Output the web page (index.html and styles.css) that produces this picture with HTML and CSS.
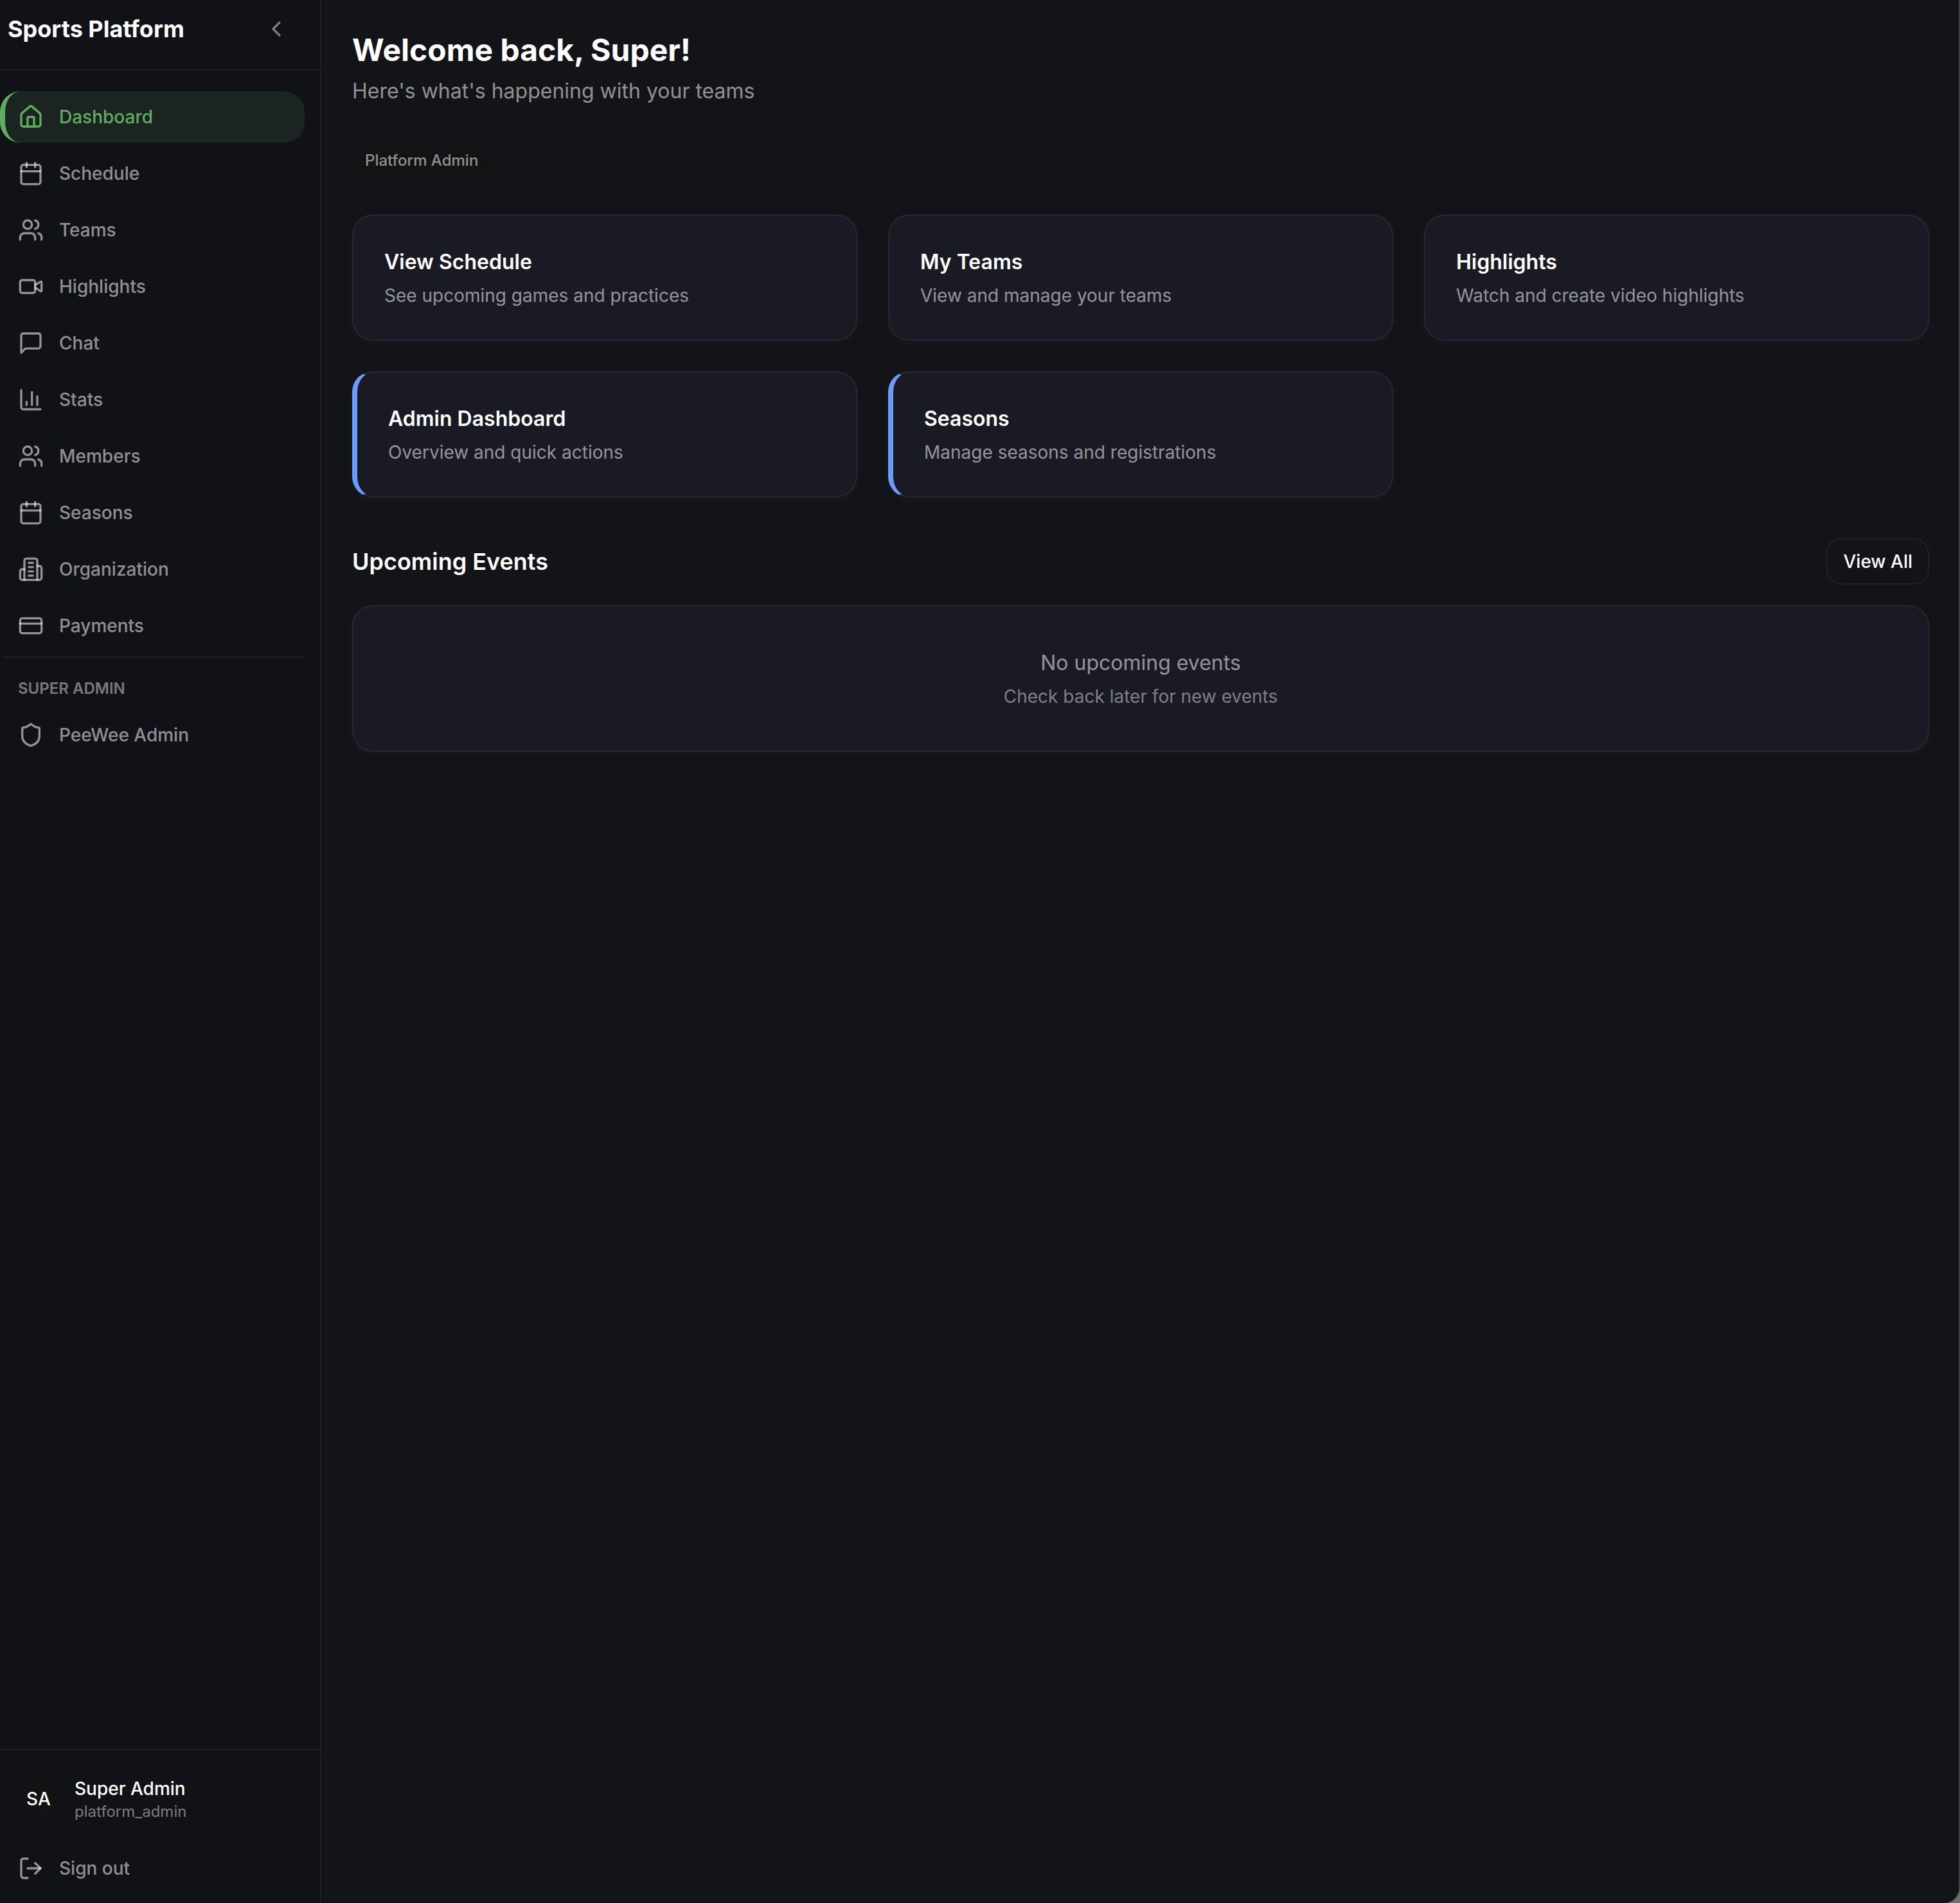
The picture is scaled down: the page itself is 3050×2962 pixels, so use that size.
FILE: index.html
```html
<!DOCTYPE html>
<html lang="en">
<head>
    <meta charset="UTF-8">
    <meta name="viewport" content="width=device-width, initial-scale=1.0">
    <title>Sports Platform</title>
    <link rel="stylesheet" href="styles.css">
</head>
<body>
    <div class="app">
        <aside class="sidebar">
            <div class="sidebar-header">
                <span class="brand">Sports Platform</span>
                <button type="button" class="collapse-btn" aria-label="Collapse sidebar">
                    <svg class="icon" viewBox="0 0 24 24"><path d="m15 18-6-6 6-6"/></svg>
                </button>
            </div>

            <nav class="nav">
                <a href="#" class="nav-item active">
                    <svg class="icon" viewBox="0 0 24 24"><path d="M15 21v-8a1 1 0 0 0-1-1h-4a1 1 0 0 0-1 1v8"/><path d="M3 10a2 2 0 0 1 .709-1.528l7-5.999a2 2 0 0 1 2.582 0l7 5.999A2 2 0 0 1 21 10v9a2 2 0 0 1-2 2H5a2 2 0 0 1-2-2z"/></svg>
                    Dashboard
                </a>
                <a href="#" class="nav-item">
                    <svg class="icon" viewBox="0 0 24 24"><path d="M8 2v4"/><path d="M16 2v4"/><rect width="18" height="18" x="3" y="4" rx="2"/><path d="M3 10h18"/></svg>
                    Schedule
                </a>
                <a href="#" class="nav-item">
                    <svg class="icon" viewBox="0 0 24 24"><path d="M16 21v-2a4 4 0 0 0-4-4H6a4 4 0 0 0-4 4v2"/><circle cx="9" cy="7" r="4"/><path d="M22 21v-2a4 4 0 0 0-3-3.87"/><path d="M16 3.13a4 4 0 0 1 0 7.75"/></svg>
                    Teams
                </a>
                <a href="#" class="nav-item">
                    <svg class="icon" viewBox="0 0 24 24"><path d="m16 13 5.223 3.482a.5.5 0 0 0 .777-.416V7.87a.5.5 0 0 0-.752-.432L16 10.5"/><rect x="2" y="6" width="14" height="12" rx="2"/></svg>
                    Highlights
                </a>
                <a href="#" class="nav-item">
                    <svg class="icon" viewBox="0 0 24 24"><path d="M21 15a2 2 0 0 1-2 2H7l-4 4V5a2 2 0 0 1 2-2h14a2 2 0 0 1 2 2z"/></svg>
                    Chat
                </a>
                <a href="#" class="nav-item">
                    <svg class="icon" viewBox="0 0 24 24"><path d="M3 3v16a2 2 0 0 0 2 2h16"/><path d="M18 17V9"/><path d="M13 17V5"/><path d="M8 17v-3"/></svg>
                    Stats
                </a>
                <a href="#" class="nav-item">
                    <svg class="icon" viewBox="0 0 24 24"><path d="M16 21v-2a4 4 0 0 0-4-4H6a4 4 0 0 0-4 4v2"/><circle cx="9" cy="7" r="4"/><path d="M22 21v-2a4 4 0 0 0-3-3.87"/><path d="M16 3.13a4 4 0 0 1 0 7.75"/></svg>
                    Members
                </a>
                <a href="#" class="nav-item">
                    <svg class="icon" viewBox="0 0 24 24"><path d="M8 2v4"/><path d="M16 2v4"/><rect width="18" height="18" x="3" y="4" rx="2"/><path d="M3 10h18"/></svg>
                    Seasons
                </a>
                <a href="#" class="nav-item">
                    <svg class="icon" viewBox="0 0 24 24"><path d="M6 22V4a2 2 0 0 1 2-2h8a2 2 0 0 1 2 2v18Z"/><path d="M6 12H4a2 2 0 0 0-2 2v6a2 2 0 0 0 2 2h2"/><path d="M18 9h2a2 2 0 0 1 2 2v9a2 2 0 0 1-2 2h-2"/><path d="M10 6h4"/><path d="M10 10h4"/><path d="M10 14h4"/><path d="M10 18h4"/></svg>
                    Organization
                </a>
                <a href="#" class="nav-item">
                    <svg class="icon" viewBox="0 0 24 24"><rect width="20" height="14" x="2" y="5" rx="2"/><path d="M2 10h20"/></svg>
                    Payments
                </a>

                <div class="nav-section">
                    <p class="nav-label">Super Admin</p>
                    <a href="#" class="nav-item">
                        <svg class="icon" viewBox="0 0 24 24"><path d="M20 13c0 5-3.5 7.5-7.66 8.95a1 1 0 0 1-.67-.01C7.5 20.5 4 18 4 13V6a1 1 0 0 1 1-1c2 0 4.5-1.2 6.24-2.72a1.17 1.17 0 0 1 1.52 0C14.51 3.81 17 5 19 5a1 1 0 0 1 1 1z"/></svg>
                        PeeWee Admin
                    </a>
                </div>
            </nav>

            <div class="sidebar-footer">
                <div class="user">
                    <span class="avatar">SA</span>
                    <div>
                        <p class="user-name">Super Admin</p>
                        <p class="user-role">platform_admin</p>
                    </div>
                </div>
                <button type="button" class="nav-item">
                    <svg class="icon" viewBox="0 0 24 24"><path d="M9 21H5a2 2 0 0 1-2-2V5a2 2 0 0 1 2-2h4"/><path d="m16 17 5-5-5-5"/><path d="M21 12H9"/></svg>
                    Sign out
                </button>
            </div>
        </aside>

        <main class="main">
            <header>
                <h1>Welcome back, Super!</h1>
                <p class="subtitle">Here's what's happening with your teams</p>
            </header>

            <span class="badge">Platform Admin</span>

            <div class="cards">
                <a href="#" class="card">
                    <h2>View Schedule</h2>
                    <p>See upcoming games and practices</p>
                </a>
                <a href="#" class="card">
                    <h2>My Teams</h2>
                    <p>View and manage your teams</p>
                </a>
                <a href="#" class="card">
                    <h2>Highlights</h2>
                    <p>Watch and create video highlights</p>
                </a>
                <a href="#" class="card card-admin">
                    <h2>Admin Dashboard</h2>
                    <p>Overview and quick actions</p>
                </a>
                <a href="#" class="card card-admin">
                    <h2>Seasons</h2>
                    <p>Manage seasons and registrations</p>
                </a>
            </div>

            <section class="events">
                <div class="events-header">
                    <h2>Upcoming Events</h2>
                    <button type="button" class="btn-outline">View All</button>
                </div>
                <div class="card empty">
                    <p class="empty-title">No upcoming events</p>
                    <p>Check back later for new events</p>
                </div>
            </section>
        </main>
    </div>
</body>
</html>
```

FILE: styles.css
```css
:root {
    --background: #131418;
    --sidebar: #111217;
    --card: #1a1a24;
    --border: rgba(255, 255, 255, 0.06);
    --text: #ffffff;
    --text-muted: rgba(255, 255, 255, 0.55);
    --text-faint: rgba(255, 255, 255, 0.45);
    --primary: #5fad60;
    --admin: #6a9cf8;
}

* {
    box-sizing: border-box;
    margin: 0;
    padding: 0;
}

body {
    font-family: Inter, 'Liberation Sans', sans-serif;
    font-size: 28px;
    line-height: 40px;
    color: var(--text);
    background-color: #6d706e;
}

a {
    color: inherit;
    text-decoration: none;
}

button {
    font: inherit;
    color: inherit;
    background: none;
    border: none;
    cursor: pointer;
}

.app {
    display: flex;
    min-height: 100vh;
    background-color: var(--background);
    border-right: 2px solid #404145;
    border-bottom-right-radius: 24px;
    overflow: hidden;
}

.icon {
    width: 40px;
    height: 40px;
    flex-shrink: 0;
    fill: none;
    stroke: currentColor;
    stroke-width: 2;
    stroke-linecap: round;
    stroke-linejoin: round;
}

/* Sidebar */
.sidebar {
    display: flex;
    flex-direction: column;
    width: 500px;
    flex-shrink: 0;
    background-color: var(--sidebar);
    border-right: 2px solid var(--border);
}

.sidebar-header {
    display: flex;
    align-items: center;
    justify-content: space-between;
    padding: 13px 36px 31px 12px;
    border-bottom: 2px solid var(--border);
}

.brand {
    font-size: 36px;
    font-weight: 700;
}

.collapse-btn {
    display: flex;
    align-items: center;
    justify-content: center;
    width: 64px;
    height: 64px;
    color: var(--text-faint);
}

.nav {
    display: flex;
    flex-direction: column;
    gap: 8px;
    flex: 1;
    padding: 32px 24px 32px 0;
}

.nav-item {
    display: flex;
    align-items: center;
    gap: 24px;
    width: 100%;
    padding: 20px 28px;
    border-radius: 32px;
    font-weight: 500;
    color: var(--text-muted);
}

.nav-item:hover {
    color: var(--text);
}

.nav-item.active {
    padding-left: 20px;
    border-left: 8px solid var(--primary);
    background-color: #1c2422;
    color: var(--primary);
}

.nav-section {
    margin-left: 4px;
    padding-top: 32px;
    border-top: 2px solid var(--border);
}

.nav-label {
    padding: 0 24px 16px;
    font-size: 24px;
    line-height: 32px;
    font-weight: 600;
    text-transform: uppercase;
    color: var(--text-faint);
}

.nav-section .nav-item {
    padding-left: 24px;
}

.sidebar-footer {
    padding: 24px 24px 14px 0;
    border-top: 2px solid var(--border);
}

.user {
    display: flex;
    align-items: center;
    gap: 24px;
    margin-bottom: 16px;
    padding: 16px 28px;
}

.avatar {
    display: flex;
    align-items: center;
    justify-content: center;
    width: 64px;
    height: 64px;
    border-radius: 50%;
    background-color: #131314;
    font-weight: 500;
}

.user-name {
    font-weight: 500;
}

.user-role {
    font-size: 24px;
    line-height: 32px;
    color: var(--text-faint);
}

/* Main content */
.main {
    flex: 1;
    padding: 46px 46px 48px 48px;
}

h1 {
    margin-bottom: 8px;
    font-size: 48px;
    line-height: 64px;
    font-weight: 700;
}

.subtitle {
    font-size: 32px;
    line-height: 48px;
    color: var(--text-muted);
}

.badge {
    display: table;
    margin: 64px 0;
    padding: 4px 20px;
    border-radius: 20px;
    background-color: #131314;
    font-size: 24px;
    line-height: 32px;
    font-weight: 500;
    color: var(--text-muted);
}

.cards {
    display: grid;
    grid-template-columns: repeat(3, 1fr);
    gap: 48px;
}

.card {
    padding: 48px;
    background-color: var(--card);
    border: 2px solid #27272f;
    border-radius: 32px;
    box-shadow: 0 4px 12px rgba(27, 27, 40, 0.7);
    color: var(--text-muted);
}

.card-admin {
    border-left: 8px solid var(--admin);
}

.card h2 {
    margin-bottom: 8px;
    font-size: 32px;
    line-height: 48px;
    font-weight: 600;
    color: var(--text);
}

.events {
    margin-top: 64px;
}

.events-header {
    display: flex;
    align-items: center;
    justify-content: space-between;
    margin-bottom: 32px;
}

.events-header h2 {
    font-size: 36px;
    font-weight: 600;
}

.btn-outline {
    padding: 14px 24px;
    border: 2px solid var(--border);
    border-radius: 24px;
    font-weight: 500;
}

.empty {
    padding: 64px 48px;
    text-align: center;
    color: var(--text-faint);
}

.empty-title {
    margin-bottom: 8px;
    font-size: 32px;
    line-height: 48px;
    color: var(--text-muted);
}
```
